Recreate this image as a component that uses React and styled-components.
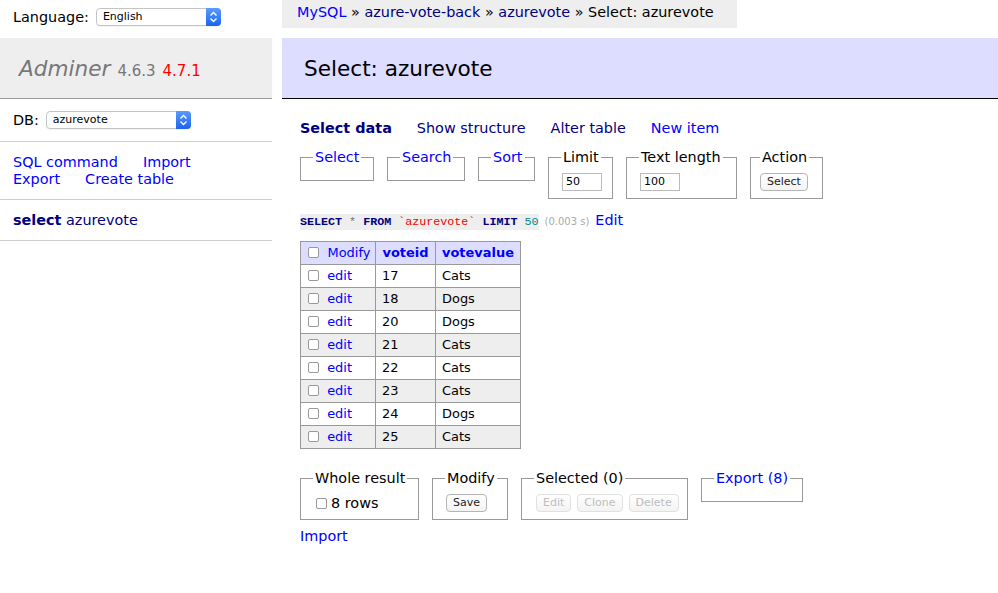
import React from "react";
import styled, { createGlobalStyle } from "styled-components";

const Global = createGlobalStyle`
    html, body { margin: 0; padding: 0; background: #fff; }
    body { font: 14.4px/1.25 "DejaVu Sans", Verdana, sans-serif; color: #000; }
    a { color: blue; text-decoration: none; }
`;

const Page = styled.div`
    display: flex;
    align-items: flex-start;
    min-height: 593px;
`;

const Sidebar = styled.div`
    width: 272px;
    flex: none;
`;

const LangBar = styled.div`
    height: 38px;
    box-sizing: border-box;
    padding: 8px 13px 0;
    display: flex;
    align-items: flex-start;
    gap: 7px;
    & > span{line-height: 19px;}
`;

const MacSelect = styled.div`
    position: relative;
    width: ${p => p.w}px;
    height: 18px;
    box-sizing: border-box;
    border: 1px solid #c4c4c4;
    border-radius: 4px;
    background: #fff;
    font: 11px/16px "DejaVu Sans", sans-serif;
    padding-left: 6px;
    color: #000;
    box-shadow: 0 1px 1px rgba(0,0,0,0.05);
    & .arrows{
        position: absolute; right: -1px; top: -1px; bottom: -1px; width: 15px;
        background: linear-gradient(#5a9cff, #1a64f0);
        border-radius: 0 4px 4px 0;
        display: flex; align-items: center; justify-content: center;
    }
`;

const Logo = styled.h1`
    margin: 0;
    height: 61px;
    box-sizing: border-box;
    padding: 17px 19px 0;
    background: #eee;
    border-bottom: 1px solid #999;
    font-size: 21.6px;
    line-height: 27px;
    font-weight: normal;
    color: #777;
    white-space: nowrap;
    & .name{font-style: italic; color: #777; margin-right: 7px;}
    & .version{font-size: 15px; color: #777;}
    & .newer{font-size: 15px; color: red; margin-left: 7px;}
`;

const MenuBlock = styled.div`
    padding: ${p => (p.row ? "12px" : "11.5px")} 12px ${p => (p.row ? "12px" : "11.5px")} 13px;
    border-bottom: 1px solid #ccc;
    line-height: 17px;
    display: ${p => (p.row ? "flex" : "block")};
    align-items: center;
    gap: 7px;
    & a{margin-right: 25px; white-space: nowrap;}
    & b{color: navy;}
    & a.nav{color: navy;}
`;

const Main = styled.div`
    flex: 1;
    margin-left: 10px;
    min-width: 0;
`;

const Breadcrumb = styled.div`
    display: inline-block;
    height: 28px;
    line-height: 25px;
    background: #eee;
    padding: 0 23px 0 15px;
    white-space: nowrap;
    & a.nav{color: navy;}
`;

const Title = styled.h2`
    margin: 10px 0 0;
    height: 61px;
    box-sizing: border-box;
    padding: 17px 22px 0;
    background: #ddf;
    border-bottom: 1px solid #000;
    font-size: 21.6px;
    line-height: 27px;
    font-weight: normal;
`;

const Content = styled.div`
    padding: 0 0 0 18px;
`;

const Links = styled.p`
    margin: 21px 0 0;
    line-height: 17px;
    display: flex;
    & > *{margin-right: 25px; white-space: nowrap;}
    & .cur{color: navy; font-weight: bold;}
    & .nav{color: navy;}
`;

const Row = styled.div`
    display: flex;
    align-items: flex-start;
    gap: 13px;
    margin-top: ${p => p.top}px;
`;

const Box = styled.fieldset`
    margin: 0;
    box-sizing: border-box;
    width: ${p => p.w}px;
    padding: ${p => (p.empty ? "0 0 14px" : `7px 0 ${p.pb ?? 7}px`)};
    padding-left: ${p => p.pl ?? 12}px;
    border: 1px solid #999;
    min-width: 0;
    display: flex;
    align-items: center;
    gap: 6px;
    & legend{padding: 0 2px; line-height: 18px; white-space: nowrap; color: ${p => (p.link ? "blue" : "#000")};}
`;

const SmallInput = styled.div`
    width: 40px;
    height: 18px;
    box-sizing: border-box;
    border: 1px solid #bbb;
    font: 11px/16px "DejaVu Sans", sans-serif;
    padding-left: 3px;
    margin-left: 1px;
`;

const Button = styled.span`
    display: inline-block;
    height: 18px;
    box-sizing: border-box;
    padding: 0 6px;
    border: 1px solid ${p => (p.off ? "#e0e0e0" : "#b5b5b5")};
    border-radius: 4px;
    background: linear-gradient(#fff, #f3f3f3);
    font: 11px/16px "DejaVu Sans", sans-serif;
    color: ${p => (p.off ? "#bdbdbd" : "#222")};
    white-space: nowrap;
`;

const Check = styled.span`
    display: inline-block;
    width: 11px;
    height: 11px;
    box-sizing: border-box;
    border: 1px solid #999;
    border-radius: 2px;
    background: #fff;
    flex: none;
    vertical-align: -1px;
`;

const Query = styled.p`
    margin: 12px 0 0;
    line-height: 18px;
    & code{
        font: 11.7px "Liberation Mono", monospace;
        background: #eee;
        padding: 1px 0;
    }
    & .kw{color: #000080; font-weight: bold;}
    & .op{color: #777;}
    & .str{color: #e00;}
    & .num{color: #088;}
    & .time{color: #aaa; font-size: 10px; margin: 0 6px;}
`;

const Grid = styled.table`
    border-collapse: collapse;
    table-layout: fixed;
    width: 221px;
    margin-top: 10px;
    border-top: 1px solid #999;
    border-left: 1px solid #999;
    font-size: 12.96px;
    line-height: 16.5px;
    & td, & th{
        border-right: 1px solid #999;
        border-bottom: 1px solid #999;
        padding: 3px 4px 2px 6px;
        text-align: left;
        height: 17px;
        white-space: nowrap;
        overflow: hidden;
    }
    & thead th{background: #ddf; text-align: center; padding: 3px 4px 2px;}
    & thead th a{font-weight: bold;}
    & thead th.mod{padding-left: 7px; text-align: left;}
    & tbody tr:nth-child(2n){background: #eee;}
    & td.first{padding-left: 7px;}
`;

const Label = styled.span`
    display: inline-flex;
    align-items: center;
    gap: 4px;
    padding-left: 3px;
`;

const Import = styled.p`
    margin: 7px 0 0;
    line-height: 18px;
`;

const Arrows = () => (
    <span className="arrows">
        <svg width="9" height="12" viewBox="0 0 9 12">
            <path d="M1.5 4.5 L4.5 1.5 L7.5 4.5 M1.5 7.5 L4.5 10.5 L7.5 7.5" fill="none" stroke="#fff" strokeWidth="1.4" />
        </svg>
    </span>
);

const rows = [
    [17, "Cats"], [18, "Dogs"], [20, "Dogs"], [21, "Cats"],
    [22, "Cats"], [23, "Cats"], [24, "Dogs"], [25, "Cats"],
];

export default function App() {
    return (
        <>
            <Global />
            <Page>
                <Sidebar>
                    <LangBar>
                        <span>Language:</span>
                        <MacSelect w={125}>English<Arrows /></MacSelect>
                    </LangBar>
                    <Logo>
                        <a className="name">Adminer</a>
                        <span className="version">4.6.3</span>
                        <a className="newer">4.7.1</a>
                    </Logo>
                    <MenuBlock row>
                        <span>DB:</span>
                        <MacSelect w={145}>azurevote<Arrows /></MacSelect>
                    </MenuBlock>
                    <MenuBlock>
                        <a>SQL command</a><a>Import</a><br />
                        <a>Export</a><a>Create table</a>
                    </MenuBlock>
                    <MenuBlock>
                        <b>select</b> <a className="nav">azurevote</a>
                    </MenuBlock>
                </Sidebar>
                <Main>
                    <Breadcrumb>
                        <a>MySQL</a> » <a className="nav">azure-vote-back</a> » <a className="nav">azurevote</a> » Select: azurevote
                    </Breadcrumb>
                    <Title>Select: azurevote</Title>
                    <Content>
                        <Links>
                            <span className="cur">Select data</span>
                            <a className="nav">Show structure</a>
                            <a className="nav">Alter table</a>
                            <a>New item</a>
                        </Links>
                        <Row top={11}>
                            <Box link empty w={74}><legend>Select</legend></Box>
                            <Box link empty w={78}><legend>Search</legend></Box>
                            <Box link empty w={57}><legend>Sort</legend></Box>
                            <Box w={65}><legend>Limit</legend><SmallInput>50</SmallInput></Box>
                            <Box w={111}><legend>Text length</legend><SmallInput>100</SmallInput></Box>
                            <Box w={73} pl={9}><legend>Action</legend><Button>Select</Button></Box>
                        </Row>
                        <Query>
                            <code>
                                <span className="kw">SELECT</span> <span className="op">*</span> <span className="kw">FROM</span>{" "}
                                <span className="str">`azurevote`</span> <span className="kw">LIMIT</span>{" "}
                                <span className="num">50</span>
                            </code>
                            <span className="time">(0.003 s)</span>
                            <a>Edit</a>
                        </Query>
                        <Grid>
                            <colgroup>
                                <col style={{ width: 75 }} />
                                <col style={{ width: 60 }} />
                                <col style={{ width: 85 }} />
                            </colgroup>
                            <thead>
                                <tr>
                                    <th className="mod"><Check /> <a style={{ fontWeight: "normal", marginLeft: 4 }}>Modify</a></th>
                                    <th><a>voteid</a></th>
                                    <th><a>votevalue</a></th>
                                </tr>
                            </thead>
                            <tbody>
                                {rows.map(([id, v]) => (
                                    <tr key={id}>
                                        <td className="first"><Check /> <a style={{ marginLeft: 4 }}>edit</a></td>
                                        <td>{id}</td>
                                        <td>{v}</td>
                                    </tr>
                                ))}
                            </tbody>
                        </Grid>
                        <Row top={20}>
                            <Box w={119}><legend>Whole result</legend><Label><Check />8 rows</Label></Box>
                            <Box w={76}><legend>Modify</legend><Button style={{ marginLeft: 1 }}>Save</Button></Box>
                            <Box w={167} pl={14}>
                                <legend style={{ marginLeft: -2 }}>Selected (0)</legend>
                                <Button off>Edit</Button><Button off>Clone</Button><Button off>Delete</Button>
                            </Box>
                            <Box link empty w={102}><legend>Export (8)</legend></Box>
                        </Row>
                        <Import><a>Import</a></Import>
                    </Content>
                </Main>
            </Page>
        </>
    );
}
